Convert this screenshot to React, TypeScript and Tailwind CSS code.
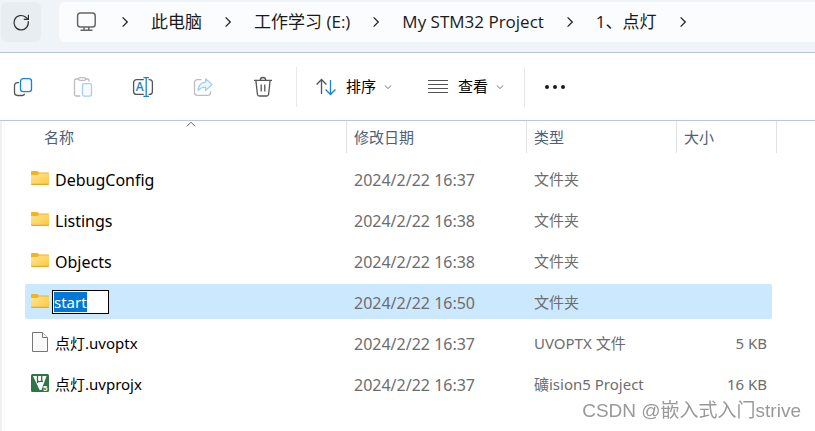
import { Fragment, useEffect, useRef, useState } from 'react';

type FileKind = 'folder' | 'file' | 'keil';

interface FileRow {
  name: string;
  date: string;
  type: string;
  size: string;
  kind: FileKind;
}

const crumbs = ['此电脑', '工作学习 (E:)', 'My STM32 Project', '1、点灯'];

const files: FileRow[] = [
  { name: 'DebugConfig', date: '2024/2/22 16:37', type: '文件夹', size: '', kind: 'folder' },
  { name: 'Listings', date: '2024/2/22 16:38', type: '文件夹', size: '', kind: 'folder' },
  { name: 'Objects', date: '2024/2/22 16:38', type: '文件夹', size: '', kind: 'folder' },
  { name: 'start', date: '2024/2/22 16:50', type: '文件夹', size: '', kind: 'folder' },
  { name: '点灯.uvoptx', date: '2024/2/22 16:37', type: 'UVOPTX 文件', size: '5 KB', kind: 'file' },
  { name: '点灯.uvprojx', date: '2024/2/22 16:37', type: '礦ision5 Project', size: '16 KB', kind: 'keil' },
];

function RefreshIcon() {
  return (
    <svg className="w-6 h-6" viewBox="0 0 24 24" fill="none" stroke="#333" strokeWidth="1.2">
      <path d="M19.2 11.2A7.2 7.2 0 1 1 16.8 7.2L19 9.2" />
      <path d="M19.4 4.8V9.4H14.8" />
    </svg>
  );
}

function MonitorIcon() {
  return (
    <svg className="w-6 h-5 shrink-0" viewBox="0 0 24 20" fill="none" stroke="#666" strokeWidth="1.5">
      <rect x="2.6" y="1" width="17.6" height="14" rx="2.8" />
      <path d="M9 15v3M13.800 15v3M5.500 18.300h12" />
    </svg>
  );
}

function ChevronRight() {
  return (
    <svg className="w-2 h-3 shrink-0" viewBox="0 0 8 12" fill="none" stroke="#222" strokeWidth="1.3">
      <path d="M1.6 1.4 6.3 6 1.6 10.6" />
    </svg>
  );
}

function ChevronDown() {
  return (
    <svg className="w-2 h-2" viewBox="0 0 8 8" fill="none" stroke="#777" strokeWidth="1">
      <path d="M.8 2.5 4 5.5l3.2-3" />
    </svg>
  );
}

function CopyIcon() {
  return (
    <svg className="w-6 h-6" viewBox="0 0 24 24" fill="none" strokeWidth="1.3">
      <path stroke="#555" d="M8 7.6H6.4a2.9 2.9 0 0 0-2.9 2.9v7.1a2.9 2.9 0 0 0 2.9 2.9h4.8c1.1 0 2-.6 2.5-1.6" />
      <rect stroke="#1a82d6" fill="#f7fbff" x="9.5" y="3.6" width="11" height="13" rx="2.6" />
    </svg>
  );
}

function PasteIcon() {
  return (
    <svg className="w-6 h-6" viewBox="0 0 24 24" fill="none" strokeWidth="1.3">
      <path stroke="#bdbdbd" d="M7.5 4H5a1.5 1.5 0 0 0-1.5 1.5v14A1.5 1.5 0 0 0 5 21h4.4M14.8 4h1.7A1.5 1.5 0 0 1 18 5.5v1.3" />
      <rect stroke="#bdbdbd" x="7.6" y="2.6" width="7" height="2.8" rx="1.4" />
      <rect stroke="#a5cff0" fill="#f7fbff" x="11.5" y="8.6" width="9" height="12.6" rx="1.6" />
    </svg>
  );
}

function RenameIcon() {
  return (
    <svg className="w-6 h-6" viewBox="0 0 24 24" fill="none" strokeWidth="1.3">
      <path stroke="#555" d="M12.8 4.6H5.6a3 3 0 0 0-3 3v8.8a3 3 0 0 0 3 3h7.2M17.6 4.6h.8a3 3 0 0 1 3 3v8.8a3 3 0 0 1-3 3h-.8" />
      <path stroke="#1a82d6" d="M12.4 2.6h5.6M12.4 21.4h5.6M15.2 2.6v18.8" />
      <text x="4.8" y="16" fontSize="12" fontWeight="600" fill="#1a82d6" fontFamily="Open Sans">A</text>
    </svg>
  );
}

function ShareIcon() {
  return (
    <svg className="w-6 h-6" viewBox="0 0 24 24" fill="none" strokeWidth="1.3">
      <path stroke="#bdbdbd" d="M10.5 4.6H6.4a2.9 2.9 0 0 0-2.9 2.9v10a2.9 2.9 0 0 0 2.9 2.9h10.2a2.9 2.9 0 0 0 2.9-2.9v-1.2" />
      <path stroke="#a5cff0" fill="#eef7ff" strokeLinejoin="round" d="M14.6 3.8 21 9.6l-6.4 5.8v-3.3c-3.4 0-5.6.9-7.6 3.6.4-5 2.9-8.1 7.6-8.5z" />
    </svg>
  );
}

function TrashIcon() {
  return (
    <svg className="w-6 h-6" viewBox="0 0 24 24" fill="none" stroke="#555" strokeWidth="1.3">
      <path d="M3 5.4h18M9.3 5.2a2.7 2.7 0 0 1 5.4 0M4.9 5.6l1.5 13.6a2 2 0 0 0 2 1.8h7.2a2 2 0 0 0 2-1.8l1.5-13.6M10.2 9.6v6.8M13.8 9.6v6.8" />
    </svg>
  );
}

function SortIcon() {
  return (
    <svg className="w-5 h-5" viewBox="0 0 20 20" fill="none" strokeWidth="1.3">
      <path stroke="#555" d="M5.5 17V2.6M.6 7.5l4.900-5 4.900 5" />
      <path stroke="#1a82d6" d="M14.5 3v14.400M9.600 12.500l4.900 5 4.900-5" />
    </svg>
  );
}

function ListIcon() {
  return (
    <svg className="w-5 h-5" viewBox="0 0 20 20" fill="none" stroke="#555" strokeWidth="1.1">
      <path d="M0 3.5h20M0 7.5h20M0 11.5h20M0 15.5h20" />
    </svg>
  );
}

function FileIcon({ kind }: { kind: FileKind }) {
  if (kind === 'folder') {
    return (
      <svg className="w-[18px] h-[21px] shrink-0" viewBox="0 0 18 21">
        <defs>
          <linearGradient id="folder" x1="0" y1="0" x2="1" y2="1">
            <stop offset="0" stopColor="#ffe59a" />
            <stop offset="1" stopColor="#fdc93c" />
          </linearGradient>
        </defs>
        <path fill="#f5b31c" d="M0 4c0-.6.4-1 1-1h5c.5 0 .8.2 1.100.5L8 4.500h9c.6 0 1 .4 1 1V16H0z" />
        <path fill="url(#folder)" d="M0 7h6.500L8 5.500h10v10c0 .6-.4 1-1 1H1c-.6 0-1-.4-1-1z" />
        <path fill="#e9a92b" d="M0 15.800h18c0 .8-.4 1.200-1.100 1.200H1.100C.4 17 0 16.600 0 15.800z" />
      </svg>
    );
  }
  if (kind === 'file') {
    return (
      <svg className="w-[18px] h-[21px] shrink-0" viewBox="0 0 18 21" fill="#fafafa" stroke="#777" strokeWidth="1">
        <path d="M1.500.500h10L16.500 5.500v14h-15z" />
        <path d="M11.500.500v5h5" />
      </svg>
    );
  }
  return (
    <svg className="w-[18px] h-[21px] shrink-0" viewBox="0 0 18 21">
      <rect y="1" width="18" height="18" rx="1.500" fill="#2f7545" />
      <path fill="#fff" d="M2 3h13.500L10.500 17H8.600z" />
      <path fill="none" stroke="#2f7545" strokeWidth="1.300" d="M6.500 3v7M6.500 7.500c.5 1.500 4 1.500 4.200-.5V3M10.700 7c0 1 .4 1.500 1.300 1.500" />
      <path fill="#2f7545" d="M12.500 11.500H17V18h-5.500z" />
      <text x="12" y="17.500" fontSize="8" fontWeight="700" fill="#fff" fontFamily="Liberation Sans">5</text>
    </svg>
  );
}

function IconButton({ label, disabled, children }: { label: string; disabled?: boolean; children: React.ReactNode }) {
  return (
    <button aria-label={label} disabled={disabled} className="w-10 h-10 flex items-center justify-center rounded">
      {children}
    </button>
  );
}

export default function App() {
  const [newName, setNewName] = useState('start');
  const inputRef = useRef<HTMLInputElement>(null);

  useEffect(() => {
    inputRef.current?.focus();
    inputRef.current?.select();
  }, []);

  return (
    <div className="min-h-screen flex flex-col bg-white text-black font-['Noto_Sans','Noto_Sans_CJK_SC',sans-serif]">
      <header className="flex gap-[18px] pl-px pt-[2px] pb-[10px] bg-[#eff4f9] border-b border-[#b9c8dc]">
        <button aria-label="刷新" className="w-10 h-10 flex items-center justify-center rounded-md bg-[#e8edf1]">
          <RefreshIcon />
        </button>
        <nav
          aria-label="路径"
          className="flex-1 h-10 pl-4 flex items-center gap-[22px] rounded-l-md bg-[#fbfcfe] text-[17px] text-[#1a1a1a] whitespace-nowrap overflow-hidden font-['Open_Sans','Noto_Sans_CJK_SC',sans-serif]"
        >
          <MonitorIcon />
          <ChevronRight />
          {crumbs.map((crumb) => (
            <Fragment key={crumb}>
              <a href="#">{crumb}</a>
              <ChevronRight />
            </Fragment>
          ))}
        </nav>
      </header>

      <div className="h-[68px] pl-[3px] flex items-center border-b border-[#b9c8dc] text-[15px]">
        <div className="flex gap-5">
          <IconButton label="复制"><CopyIcon /></IconButton>
          <IconButton label="粘贴" disabled><PasteIcon /></IconButton>
          <IconButton label="重命名"><RenameIcon /></IconButton>
          <IconButton label="共享" disabled><ShareIcon /></IconButton>
          <IconButton label="删除"><TrashIcon /></IconButton>
        </div>
        <div className="ml-[13px] pl-[19px] h-10 flex items-center gap-9 border-l border-[#e8e8e8]">
          <button className="flex items-center gap-2">
            <SortIcon />
            <span className="pl-[2px]">排序</span>
            <ChevronDown />
          </button>
          <button className="flex items-center gap-2">
            <ListIcon />
            <span className="pl-[2px]">查看</span>
            <ChevronDown />
          </button>
        </div>
        <div className="ml-5 pl-[10px] h-10 flex items-center border-l border-[#e8e8e8]">
          <button aria-label="更多" className="w-10 h-10 flex items-center justify-center">
            <svg className="w-5 h-1" viewBox="0 0 20 4" fill="#1a1a1a">
              <circle cx="2" cy="2" r="2" />
              <circle cx="10" cy="2" r="2" />
              <circle cx="18" cy="2" r="2" />
            </svg>
          </button>
        </div>
      </div>

      <main className="flex-1 flex border-l-2 border-[#f0f0f0] text-[15px]">
        <div className="flex-1 ml-[2px] pl-5 border-l border-[#f7f7f7]">
          <table className="w-[752px] table-fixed text-left whitespace-nowrap">
            <thead className="text-[#4c607a]">
              <tr className="h-[37px] align-top">
                <th className="w-[322px] p-0 font-normal">
                  <div className="relative h-8 ml-[10px] pl-[9px] flex items-center border-r border-[#e2e2e2]">
                    名称
                    <svg className="absolute top-0 left-1/2 -translate-x-1/2 w-[10px] h-[6px]" viewBox="0 0 10 6" fill="none" stroke="#666">
                      <path d="M.8 5.400 5 1.200l4.200 4.200" />
                    </svg>
                  </div>
                </th>
                <th className="w-[180px] p-0 font-normal">
                  <div className="h-8 pl-[7px] flex items-center border-r border-[#e2e2e2]">修改日期</div>
                </th>
                <th className="w-[150px] p-0 font-normal">
                  <div className="h-8 pl-[7px] flex items-center border-r border-[#e2e2e2]">类型</div>
                </th>
                <th className="w-[100px] p-0 font-normal">
                  <div className="h-8 pl-[7px] flex items-center border-r border-[#e2e2e2]">大小</div>
                </th>
              </tr>
            </thead>
            <tbody className="text-[#6d6d6d]">
              {files.map((file) => {
                const selected = file.name === 'start';
                const bg = selected ? 'bg-[#cce8ff]' : '';
                return (
                  <tr key={file.name} className="h-[41px]">
                    <td className="p-0">
                      <div className={`h-[35px] pl-[6px] flex items-center rounded-l-xs text-black ${bg}`}>
                        <FileIcon kind={file.kind} />
                        {selected ? (
                          <input
                            ref={inputRef}
                            aria-label="文件夹名称"
                            value={newName}
                            onChange={(e) => setNewName(e.target.value)}
                            className="w-[57px] h-6 ml-[3px] p-px border border-black bg-white outline-none selection:bg-[#0078d7] selection:text-white"
                          />
                        ) : (
                          <span className={`pl-[6px] pt-[2px] ${file.kind === 'folder' ? 'text-base' : ''}`}>{file.name}</span>
                        )}
                      </div>
                    </td>
                    <td className="p-0">
                      <div className={`h-[35px] pl-[7px] pt-[2px] flex items-center text-base ${bg}`}>{file.date}</div>
                    </td>
                    <td className="p-0">
                      <div className={`h-[35px] pl-[7px] pt-[2px] flex items-center ${bg}`}>{file.type}</div>
                    </td>
                    <td className="p-0">
                      <div className={`h-[35px] mr-[5px] pr-[5px] pt-[2px] flex items-center justify-end rounded-r-xs ${bg}`}>{file.size}</div>
                    </td>
                  </tr>
                );
              })}
            </tbody>
          </table>
        </div>
      </main>

      <div className="fixed right-[14px] bottom-[6px] text-[19px] leading-7 text-[#999] font-['Liberation_Sans','Noto_Sans_CJK_SC',sans-serif]">
        CSDN @嵌入式入门strive
      </div>
    </div>
  );
}
